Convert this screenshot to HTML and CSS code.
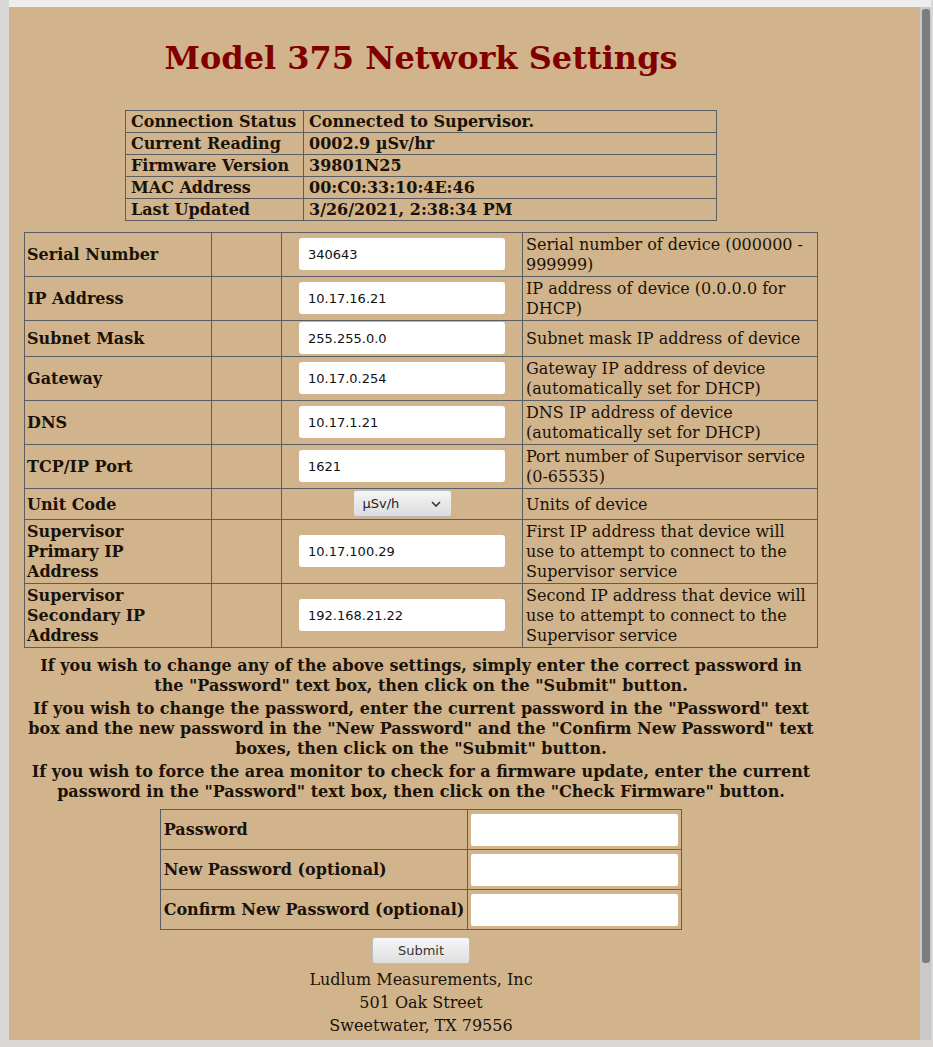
FILE: index.html
```html
<!DOCTYPE html>
<html lang="en">
<head>
<meta charset="utf-8">
<title>Model 375 Network Settings</title>
<link rel="stylesheet" href="styles.css">
</head>
<body>
<div class="frame">
  <div class="page">
    <div class="wrap">
      <h1 class="title">Model 375 Network Settings</h1>

      <table class="status">
        <tr><th>Connection Status</th><td>Connected to Supervisor.</td></tr>
        <tr><th>Current Reading</th><td>0002.9 µSv/hr</td></tr>
        <tr><th>Firmware Version</th><td>39801N25</td></tr>
        <tr><th>MAC Address</th><td>00:C0:33:10:4E:46</td></tr>
        <tr><th>Last Updated</th><td>3/26/2021, 2:38:34 PM</td></tr>
      </table>

      <table class="settings">
        <colgroup><col class="c1"><col class="c2"><col class="c3"><col class="c4"></colgroup>
        <tr><th>Serial Number</th><td></td><td class="ctl"><input class="field" type="text" value="340643"></td><td class="desc">Serial number of device (000000 - 999999)</td></tr>
        <tr><th>IP Address</th><td></td><td class="ctl"><input class="field" type="text" value="10.17.16.21"></td><td class="desc">IP address of device (0.0.0.0 for DHCP)</td></tr>
        <tr><th>Subnet Mask</th><td></td><td class="ctl"><input class="field" type="text" value="255.255.0.0"></td><td class="desc">Subnet mask IP address of device</td></tr>
        <tr><th>Gateway</th><td></td><td class="ctl"><input class="field" type="text" value="10.17.0.254"></td><td class="desc">Gateway IP address of device (automatically set for DHCP)</td></tr>
        <tr><th>DNS</th><td></td><td class="ctl"><input class="field" type="text" value="10.17.1.21"></td><td class="desc">DNS IP address of device (automatically set for DHCP)</td></tr>
        <tr><th>TCP/IP Port</th><td></td><td class="ctl"><input class="field" type="text" value="1621"></td><td class="desc">Port number of Supervisor service (0-65535)</td></tr>
        <tr><th>Unit Code</th><td></td><td class="ctl"><span class="selectwrap"><select class="unit"><option>µSv/h</option><option>mR/h</option></select><svg class="chev" width="10" height="6" viewBox="0 0 10 6"><path d="M1 1 L5 5 L9 1" fill="none" stroke="#333" stroke-width="1.6"/></svg></span></td><td class="desc">Units of device</td></tr>
        <tr><th>Supervisor Primary IP Address</th><td></td><td class="ctl"><input class="field" type="text" value="10.17.100.29"></td><td class="desc">First IP address that device will use to attempt to connect to the Supervisor service</td></tr>
        <tr><th>Supervisor Secondary IP Address</th><td></td><td class="ctl"><input class="field" type="text" value="192.168.21.22"></td><td class="desc">Second IP address that device will use to attempt to connect to the Supervisor service</td></tr>
      </table>

      <p class="note">If you wish to change any of the above settings, simply enter the correct password in the "Password" text box, then click on the "Submit" button.</p>
      <p class="note">If you wish to change the password, enter the current password in the "Password" text box and the new password in the "New Password" and the "Confirm New Password" text boxes, then click on the "Submit" button.</p>
      <p class="note">If you wish to force the area monitor to check for a firmware update, enter the current password in the "Password" text box, then click on the "Check Firmware" button.</p>

      <table class="passwords">
        <tr><th>Password</th><td><input class="pw" type="password"></td></tr>
        <tr><th>New Password (optional)</th><td><input class="pw" type="password"></td></tr>
        <tr><th>Confirm New Password (optional)</th><td><input class="pw" type="password"></td></tr>
      </table>

      <div class="actions"><button class="btn" type="button">Submit</button></div>

      <div class="footer">
        <div>Ludlum Measurements, Inc</div>
        <div>501 Oak Street</div>
        <div>Sweetwater, TX 79556</div>
      </div>
    </div>
  </div>
  <div class="scrollbar"><div class="thumb"></div></div>
</div>
</body>
</html>
```

FILE: styles.css
```css
html, body {
  margin: 0;
  padding: 0;
}
body {
  background: #d9d8d6;
  font-family: "DejaVu Serif", serif;
  font-size: 16px;
  color: #1a1208;
  height: 1047px;
  overflow: hidden;
}
.frame {
  margin-left: 9px;
  width: 922px;
  height: 1033px;
  border-top: 7px solid #ededec;
  display: flex;
}
.page {
  flex: 1;
  background: #d2b48c;
  overflow: hidden;
}
.scrollbar {
  width: 11px;
  background: #c9c9c9;
  padding: 2px 1px 0 2px;
  box-sizing: border-box;
}
.thumb {
  height: 954px;
  background: #7b7d80;
  border-radius: 3px;
}
.wrap {
  width: 794px;
  margin-left: 15px;
}
.title {
  margin: 0;
  padding-top: 29px;
  height: 75px;
  box-sizing: border-box;
  text-align: center;
  font-family: "DejaVu Serif", serif;
  font-size: 32px;
  line-height: 44px;
  font-weight: bold;
  color: #800000;
}
table {
  border-collapse: collapse;
}
th, td {
  border: 1px solid #5a5e63;
  text-align: left;
  vertical-align: middle;
}
.status {
  margin: 28px auto 0;
  width: 592px;
  font-weight: bold;
}
.status th {
  width: 167px;
}
.status th, .status td {
  padding: 1px 5px;
  line-height: 19px;
  font-weight: bold;
}
.settings {
  margin-top: 11px;
  width: 794px;
  table-layout: fixed;
}
.c1 { width: 187px; }
.c2 { width: 70px; }
.c3 { width: 241px; }
.c4 { width: 295px; }
.settings th, .settings td {
  padding: 2px 2px 1px;
  line-height: 20px;
}
.settings th {
  padding-right: 30px;
}
.settings td.desc {
  padding-left: 3px;
}
.settings td.ctl {
  text-align: center;
  padding-top: 1px;
  padding-bottom: 2px;
}
.field {
  width: 206px;
  height: 32px;
  box-sizing: border-box;
  border: none;
  border-radius: 3px;
  background: #fff;
  padding: 0 9px;
  font-family: "DejaVu Sans", sans-serif;
  font-size: 13px;
  color: #111;
  vertical-align: middle;
}
.selectwrap {
  position: relative;
  display: inline-block;
  vertical-align: middle;
}
.unit {
  appearance: none;
  -webkit-appearance: none;
  width: 99px;
  height: 27px;
  border: 1px solid #b9b9b9;
  border-radius: 3px;
  background: linear-gradient(#f5f5f5, #dcdcdc);
  padding: 0 9px;
  font-family: "DejaVu Sans", sans-serif;
  font-size: 13px;
  color: #222;
  display: block;
}
.chev {
  position: absolute;
  right: 11px;
  top: 11px;
}
.note {
  margin: 8px 0 3px;
  text-align: center;
  font-weight: bold;
  line-height: 20px;
}
.note + .note {
  margin-top: 3px;
}
.passwords {
  margin: 7px auto 0;
  width: 522px;
}
.passwords th {
  width: 300px;
  padding: 0 3px;
  height: 39px;
  white-space: nowrap;
}
.passwords td {
  padding: 3px 3px;
}
.pw {
  display: block;
  width: 207px;
  height: 32px;
  box-sizing: border-box;
  border: none;
  border-radius: 2px;
  background: #fff;
}
.actions {
  text-align: center;
  margin-top: 7px;
}
.btn {
  width: 98px;
  height: 27px;
  border: 1px solid #bdbdbd;
  border-radius: 3px;
  background: linear-gradient(#f7f7f7, #dedede);
  font-family: "DejaVu Sans", sans-serif;
  font-size: 13px;
  color: #333;
}
.footer {
  text-align: center;
  line-height: 23px;
  margin-top: 4px;
}
```
